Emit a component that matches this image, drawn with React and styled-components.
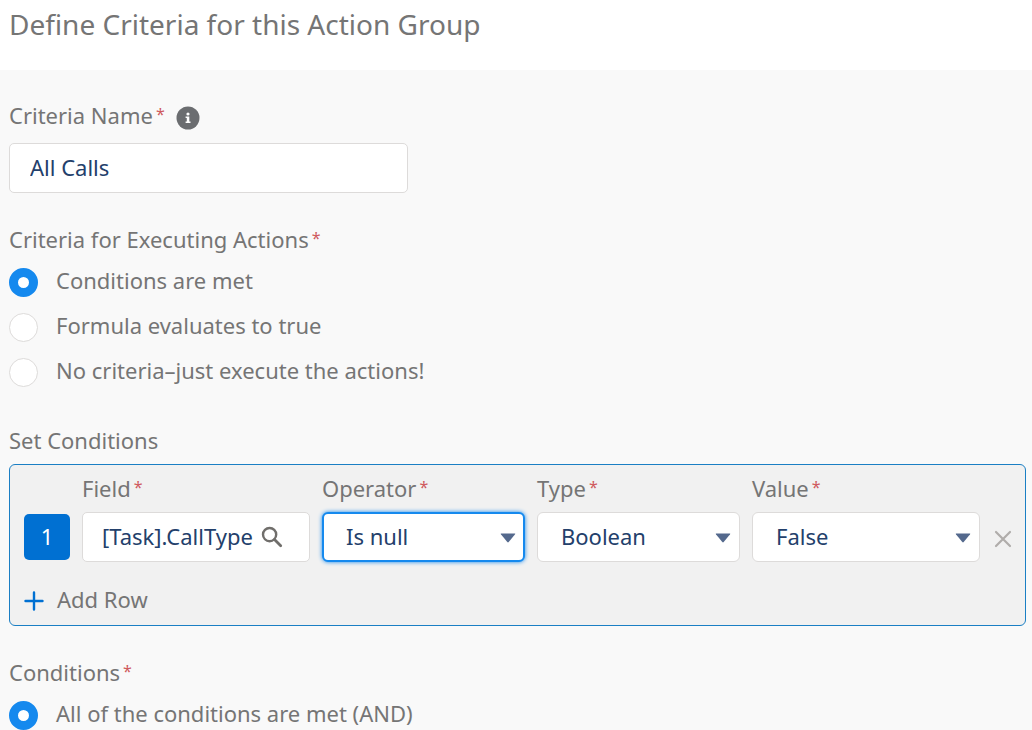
import { useState } from "react"
import styled, { createGlobalStyle } from "styled-components"

const EXECUTE_OPTIONS = [
    { value: "met", label: "Conditions are met" },
    { value: "formula", label: "Formula evaluates to true" },
    { value: "none", label: "No criteria–just execute the actions!" },
]

const MATCH_OPTIONS = [{ value: "all", label: "All of the conditions are met (AND)" }]

const Select = ({ id, label, options, defaultValue, $active }) => (
    <Field>
        <Label htmlFor={id}>
            {label}
            <Required>*</Required>
        </Label>
        <SelectWrap>
            <SelectBox id={id} defaultValue={defaultValue} $active={$active}>
                {options.map((option) => (
                    <option key={option}>{option}</option>
                ))}
            </SelectBox>
            <Arrow viewBox="0 0 16 10" aria-hidden="true">
                <path d="M1.2 0.5h13.6q0.9 0 0.3 0.8L8.7 9q-0.7 0.8-1.4 0L0.9 1.3Q0.3 0.5 1.2 0.5z" />
            </Arrow>
        </SelectWrap>
    </Field>
)

const RadioGroup = ({ name, legend, options, value, onChange }) => (
    <Group>
        <Legend>
            {legend}
            <Required>*</Required>
        </Legend>
        {options.map((option) => (
            <RadioRow key={option.value}>
                <Radio
                    type="radio"
                    name={name}
                    checked={value === option.value}
                    onChange={() => onChange(option.value)}
                />
                <RadioText>{option.label}</RadioText>
            </RadioRow>
        ))}
    </Group>
)

const App = () => {
    const [execute, setExecute] = useState("met")
    const [match, setMatch] = useState("all")

    return (
        <Page>
            <GlobalStyle />
            <Header>
                <Title>Define Criteria for this Action Group</Title>
            </Header>
            <Form onSubmit={(e) => e.preventDefault()}>
                <NameField>
                    <LabelRow>
                        <Label htmlFor="criteria-name">
                            Criteria Name
                            <Required>*</Required>
                        </Label>
                        <InfoButton type="button" aria-label="Help">
                            <svg width="24" height="24" viewBox="0 0 24 24">
                                <circle cx="12" cy="12" r="11.5" fill="#6b6d70" />
                                <circle cx="12" cy="8" r="1.6" fill="#fff" />
                                <path d="M9.6 10.5h3.7v4.9h1.2v1.6H9.6v-1.6h1.2v-3.3H9.6z" fill="#fff" />
                            </svg>
                        </InfoButton>
                    </LabelRow>
                    <TextInput id="criteria-name" defaultValue="All Calls" />
                </NameField>

                <RadioGroup
                    name="execute"
                    legend="Criteria for Executing Actions"
                    options={EXECUTE_OPTIONS}
                    value={execute}
                    onChange={setExecute}
                />

                <Section>
                    <SectionTitle>Set Conditions</SectionTitle>
                    <Panel>
                        <Condition>
                            <RowNumber>1</RowNumber>
                            <Field>
                                <Label htmlFor="field">
                                    Field
                                    <Required>*</Required>
                                </Label>
                                <Lookup>
                                    <LookupInput id="field" defaultValue="[Task].CallType" />
                                    <IconButton type="button" aria-label="Search fields">
                                        <svg width="22" height="22" viewBox="0 0 22 22" fill="none" stroke="#706e6b">
                                            <circle cx="8.6" cy="8.6" r="6.6" strokeWidth="2.4" />
                                            <path d="M13.5 13.5l6.2 6.2" strokeWidth="2.8" strokeLinecap="round" />
                                        </svg>
                                    </IconButton>
                                </Lookup>
                            </Field>
                            <Select
                                id="operator"
                                label="Operator"
                                options={["Is null", "Equals"]}
                                defaultValue="Is null"
                                $active
                            />
                            <Select id="type" label="Type" options={["Boolean"]} defaultValue="Boolean" />
                            <Select id="value" label="Value" options={["False", "True"]} defaultValue="False" />
                            <RemoveButton type="button" aria-label="Remove row">
                                <svg width="18" height="18" viewBox="0 0 18 18">
                                    <path d="M2 2l14 14M16 2L2 16" stroke="#b0adab" strokeWidth="2.2" strokeLinecap="round" />
                                </svg>
                            </RemoveButton>
                        </Condition>
                        <AddButton type="button">
                            <svg width="20" height="24" viewBox="0 0 20 24">
                                <path d="M10 5.5v17M1.5 14h17" stroke="#0070d2" strokeWidth="2.4" strokeLinecap="round" />
                            </svg>
                            Add Row
                        </AddButton>
                    </Panel>
                </Section>

                <RadioGroup
                    name="match"
                    legend="Conditions"
                    options={MATCH_OPTIONS}
                    value={match}
                    onChange={setMatch}
                />
            </Form>
        </Page>
    )
}

export default App

const GlobalStyle = createGlobalStyle`
    * {
        box-sizing: border-box;
    }

    body {
        margin: 0;
        background: #f9f9f9;
        color: #757575;
        font-family: "Noto Sans", "Open Sans", sans-serif;
        font-size: 22px;
        line-height: 28px;
    }

    button, input, select {
        font: inherit;
    }
`

const Page = styled.main`
    min-height: 100vh;
`

const Header = styled.header`
    height: 70px;
    padding: 7px 9px;
    background: #fff;
`

const Title = styled.h1`
    margin: 0;
    font-size: 28px;
    font-weight: 400;
    line-height: 34px;
`

const Form = styled.form`
    display: flex;
    flex-direction: column;
    gap: 32px;
    padding: 31px 6px 0 9px;
`

const NameField = styled.div`
    display: flex;
    flex-direction: column;
    gap: 14px;
    max-width: 399px;
`

const LabelRow = styled.div`
    display: flex;
    align-items: center;
    gap: 11px;
    height: 28px;
`

const Label = styled.label`
    white-space: nowrap;
`

const Required = styled.abbr`
    margin-left: 3px;
    color: #cf5a5e;
    font-size: 16px;
    line-height: 1;
    vertical-align: 4px;
`

const InfoButton = styled.button`
    display: flex;
    padding: 6px 0 0;
    border: 0;
    background: none;
    cursor: pointer;
`

const TextInput = styled.input`
    width: 100%;
    height: 50px;
    padding: 0 20px 2px;
    border: 1px solid #dddbda;
    border-radius: 5px;
    background: #fff;
    color: #23406b;
`

const Group = styled.fieldset`
    margin: 0;
    padding: 0;
    border: 0;
`

const Legend = styled.legend`
    padding: 0 0 6px;
`

const RadioRow = styled.label`
    display: flex;
    align-items: center;
    gap: 18px;
    height: 45px;
    cursor: pointer;
`

const Radio = styled.input`
    appearance: none;
    flex: none;
    width: 29px;
    height: 29px;
    margin: 2px 0 0;
    border: 1px solid #dddbda;
    border-radius: 50%;
    background: #fff;

    &:checked {
        border: 9px solid #1589ee;
    }
`

const RadioText = styled.span`
    padding-bottom: 4px;
`

const Section = styled.section`
    display: flex;
    flex-direction: column;
    gap: 10px;
`

const SectionTitle = styled.h2`
    margin: 0;
    font-size: 22px;
    font-weight: 400;
    line-height: 28px;
`

const Panel = styled.div`
    padding: 9px 11px 12px 14px;
    border: 1px solid #1b7fc4;
    border-radius: 6px;
    background: #f1f1f1;
`

const Condition = styled.div`
    display: grid;
    grid-template-columns: 46px 228fr 203fr 203fr 228fr 22px;
    column-gap: 12px;
    align-items: end;
`

const RowNumber = styled.div`
    display: flex;
    align-items: center;
    justify-content: center;
    height: 46px;
    margin-bottom: 2px;
    padding-bottom: 2px;
    border-radius: 5px;
    background: #0070d2;
    color: #fff;
`

const Field = styled.div`
    display: flex;
    flex-direction: column;
    gap: 10px;
    min-width: 0;
`

const Lookup = styled.div`
    display: flex;
    align-items: center;
    height: 50px;
    padding: 0 26px 0 19px;
    border: 1px solid #dddbda;
    border-radius: 5px;
    background: #fff;
`

const LookupInput = styled.input`
    flex: 1;
    min-width: 0;
    padding: 0 0 2px;
    border: 0;
    outline: 0;
    background: none;
    color: #23406b;
`

const IconButton = styled.button`
    display: flex;
    padding: 0;
    border: 0;
    background: none;
    cursor: pointer;
`

const SelectWrap = styled.div`
    position: relative;
`

const SelectBox = styled.select`
    appearance: none;
    display: block;
    width: 100%;
    height: 50px;
    padding: 0 36px 2px ${({ $active }) => ($active ? "22px" : "23px")};
    border: ${({ $active }) => ($active ? "2px solid #1589ee" : "1px solid #dddbda")};
    border-radius: 6px;
    background: #fff;
    box-shadow: ${({ $active }) => ($active ? "0 0 4px #1589ee" : "none")};
    color: #23406b;
`

const Arrow = styled.svg`
    position: absolute;
    top: 21px;
    right: 9px;
    width: 16px;
    height: 10px;
    fill: #54698d;
    pointer-events: none;
`

const RemoveButton = styled(IconButton)`
    align-items: center;
    justify-content: center;
    height: 46px;
`

const AddButton = styled.button`
    display: flex;
    align-items: center;
    gap: 13px;
    margin-top: 23px;
    padding: 0;
    border: 0;
    background: none;
    color: #757575;
    cursor: pointer;
`
